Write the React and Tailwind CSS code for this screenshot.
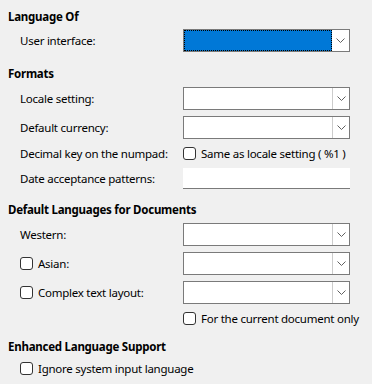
import React from "react";

const Chevron = () => (
  <svg width="9" height="5" viewBox="0 0 9 5" className="block">
    <path d="M0.5 0.5 L4.5 4.5 L8.5 0.5" fill="none" stroke="#606060" strokeWidth="1" />
  </svg>
);

const Combo = ({ focused }) => (
  <div className="flex h-[23px] w-[167px] border border-[#7a7a7a] bg-white">
    {focused ? (
      <div className="flex-1 bg-white">
        <div className="h-full border border-dotted border-black bg-[#0078d7]" />
      </div>
    ) : (
      <div className="flex-1" />
    )}
    <div
      className={
        "flex w-[17px] items-center justify-center " +
        (focused ? "" : "border-l border-[#cccccc]")
      }
    >
      <Chevron />
    </div>
  </div>
);

const Check = () => (
  <div className="h-[13px] w-[13px] shrink-0 rounded-[3px] border border-[#333333] bg-white" />
);

const Header = ({ children, className = "" }) => (
  <div className={"flex h-[18px] items-center pl-[8px] font-bold " + className}>{children}</div>
);

const Row = ({ label, children, className = "" }) => (
  <div className={"flex h-[23px] items-center " + className}>
    <div className="flex w-[183px] items-center pl-[20px]">{label}</div>
    <div className="w-[167px]">{children}</div>
  </div>
);

export default function App() {
  return (
    <div
      className="h-[384px] w-[372px] overflow-hidden bg-[#f0f0f0] pt-[8px] text-[11.5px] leading-none tracking-[-0.25px] text-black"
      style={{ fontFamily: "'Noto Sans', 'Open Sans', sans-serif" }}
    >
      <Header>Language Of</Header>
      <Row label="User interface:" className="mt-[3px]">
        <Combo focused />
      </Row>

      <Header className="mt-[13px]">Formats</Header>
      <Row label="Locale setting:" className="mt-[4px]">
        <Combo />
      </Row>
      <Row label="Default currency:" className="mt-[6px]">
        <Combo />
      </Row>
      <Row label="Decimal key on the numpad:" className="mt-[3px]">
        <div className="flex items-center gap-[5px]">
          <Check />
          <span className="whitespace-nowrap">Same as locale setting ( %1 )</span>
        </div>
      </Row>
      <div className="mt-[3px] flex h-[21px] items-center">
        <div className="w-[183px] pl-[20px]">Date acceptance patterns:</div>
        <div className="h-[21px] w-[167px] border-b border-[#7a7a7a] bg-white" />
      </div>

      <Header className="mt-[12px]">Default Languages for Documents</Header>
      <Row label="Western:" className="mt-[4px]">
        <Combo />
      </Row>
      <Row
        label={
          <span className="flex items-center gap-[5px]">
            <Check />
            Asian:
          </span>
        }
        className="mt-[6px]"
      >
        <Combo />
      </Row>
      <Row
        label={
          <span className="flex items-center gap-[5px]">
            <Check />
            Complex text layout:
          </span>
        }
        className="mt-[6px]"
      >
        <Combo />
      </Row>
      <div className="mt-[3px] flex h-[23px] items-center pl-[183px]">
        <div className="flex items-center gap-[5px]">
          <Check />
          <span className="whitespace-nowrap">For the current document only</span>
        </div>
      </div>

      <Header className="mt-[8px]">Enhanced Language Support</Header>
      <div className="mt-[1px] flex h-[23px] items-center pl-[20px]">
        <div className="flex items-center gap-[5px]">
          <Check />
          <span>Ignore system input language</span>
        </div>
      </div>
    </div>
  );
}
